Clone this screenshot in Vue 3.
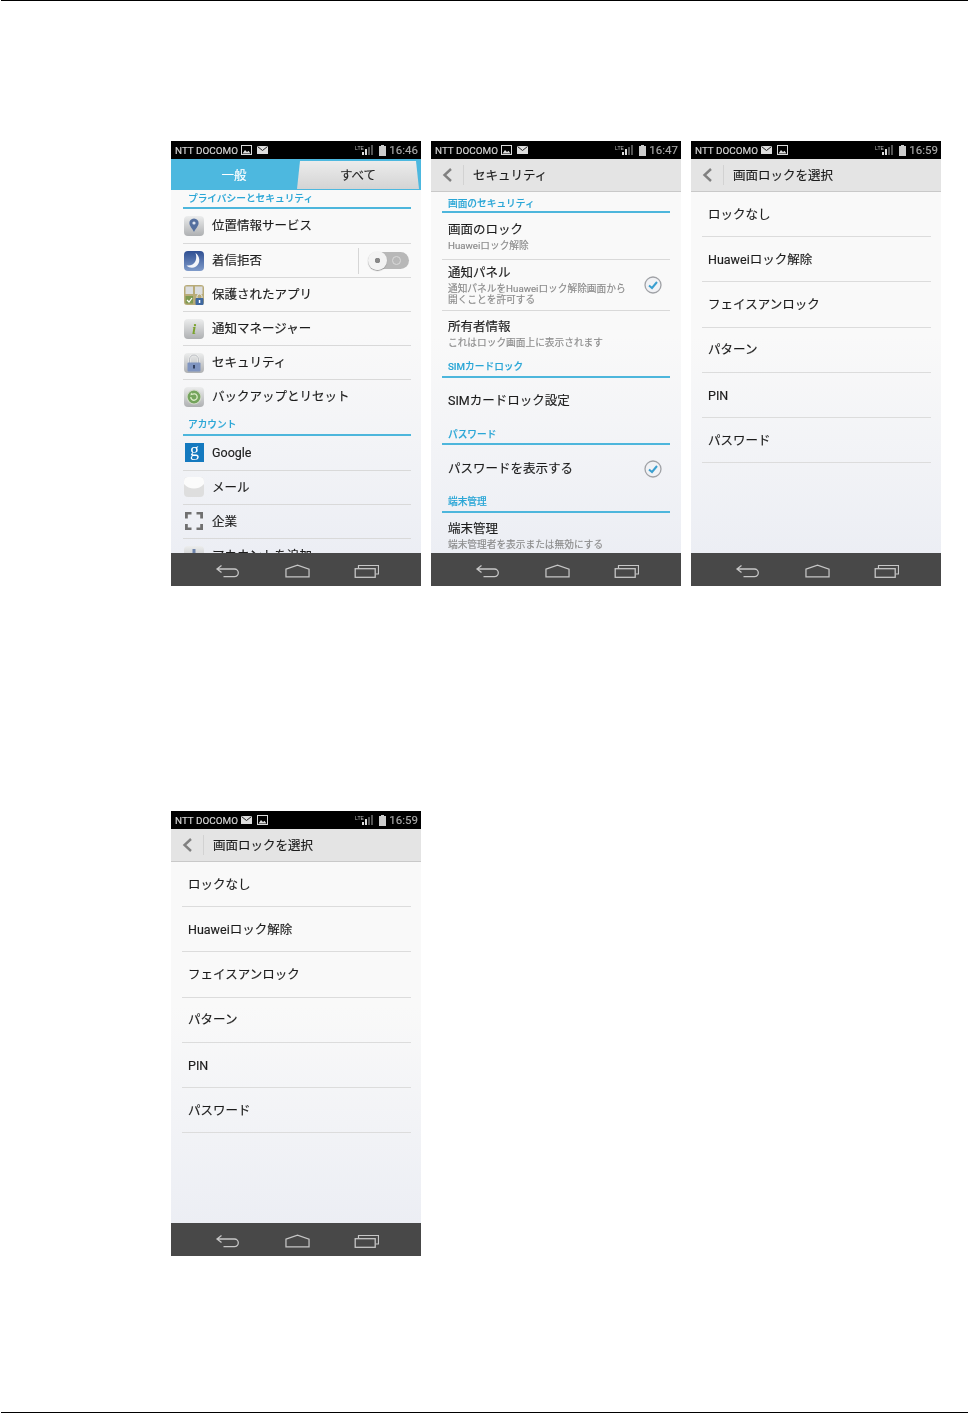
<script setup>
const settingsA = [
  { key: 'pin', label: '位置情報サービス', h: 35 },
  { key: 'moon', label: '着信拒否', h: 34, toggle: true },
  { key: 'apps', label: '保護されたアプリ', h: 34 },
  { key: 'info', label: '通知マネージャー', h: 34 },
  { key: 'lock', label: 'セキュリティ', h: 34 },
  { key: 'backup', label: 'バックアップとリセット', h: 34, last: true },
]
const settingsB = [
  { key: 'google', label: 'Google', h: 34.5, nudge: true },
  { key: 'mail', label: 'メール', h: 34 },
  { key: 'corp', label: '企業', h: 34 },
  { key: 'add', label: 'アカウントを追加', h: 34, last: true },
]
const lockOptions = ['ロックなし', 'Huaweiロック解除', 'フェイスアンロック', 'パターン', 'PIN', 'パスワード']
const rows = [
  [
    { kind: 'settings', time: '16:46', order: ['image', 'mail'] },
    { kind: 'security', time: '16:47', order: ['image', 'mail'], title: 'セキュリティ' },
    { kind: 'select', time: '16:59', order: ['mail', 'image'], title: '画面ロックを選択' },
  ],
  [{ kind: 'select', time: '16:59', order: ['mail', 'image'], title: '画面ロックを選択' }],
]
</script>

<template>
  <div class="page">
    <div class="rule"></div>
    <div v-for="(row, r) in rows" :key="r" class="shots" :class="{ second: r === 1 }">
      <section v-for="(s, i) in row" :key="i" class="phone">
        <header class="status">
          <span class="carrier">NTT DOCOMO</span>
          <template v-for="ic in s.order" :key="ic">
            <svg v-if="ic === 'image'" class="st-ic" viewBox="0 0 11 10">
              <rect x=".5" y=".5" width="10" height="9" fill="none" stroke="#ddd" />
              <path d="M1.500 8.500 L4 5 L6 7 L7.500 5.800 L9.500 8.500Z" fill="#ddd" />
            </svg>
            <svg v-else class="st-ic" viewBox="0 0 11 10">
              <rect x="0" y="1" width="11" height="8" fill="#ddd" />
              <path d="M.5 1.500 L5.500 5.500 L10.500 1.500" fill="none" stroke="#222" />
            </svg>
          </template>
          <span class="spacer"></span>
          <svg class="signal" viewBox="0 0 18 11">
            <text x="0" y="5" class="lte">LTE</text>
            <rect x="7" y="7" width="2" height="3" fill="#ddd" />
            <rect x="10" y="4" width="2" height="6" fill="#ddd" />
            <rect x="13" y="2" width="2" height="8" fill="#555" />
            <rect x="16" y="0" width="2" height="10" fill="#555" />
          </svg>
          <svg class="battery" viewBox="0 0 7 11">
            <path d="M2 0h3v1h2v10H0V1h2z" fill="#ccc" />
          </svg>
          <span class="time">{{ s.time }}</span>
        </header>

        <div v-if="s.kind === 'settings'" class="tabs">
          <span class="tab-left">一般</span>
          <span class="tab-right">すべて</span>
        </div>
        <div v-else class="actionbar">
          <svg class="chev" viewBox="0 0 11 14">
            <path d="M9 1 L2.500 7 L9 13" fill="none" stroke="#808080" stroke-width="2.400" />
          </svg>
          <span class="bar-div"></span>
          <span class="bar-title">{{ s.title }}</span>
        </div>

        <main class="content">
          <template v-if="s.kind === 'settings'">
            <div class="cat cat-a">プライバシーとセキュリティ</div>
            <template v-for="(group, g) in [settingsA, settingsB]" :key="g">
              <div v-if="g === 1" class="cat cat-b">アカウント</div>
              <div
                v-for="it in group"
                :key="it.key"
                class="set-row"
                :class="{ last: it.last }"
                :style="{ height: it.h + 'px' }"
              >
                <svg class="row-ic" viewBox="0 0 22 22">
                  <defs>
                    <linearGradient id="tile" x1="0" y1="0" x2="0" y2="1">
                      <stop offset="0" stop-color="#eceded" />
                      <stop offset="1" stop-color="#aeb0b2" />
                    </linearGradient>
                    <linearGradient id="night" x1="0" y1="0" x2="0" y2="1">
                      <stop offset="0" stop-color="#2f4f92" />
                      <stop offset="1" stop-color="#7f9bca" />
                    </linearGradient>
                  </defs>
                  <template v-if="it.key === 'pin'">
                    <rect x="1" y="1" width="20" height="20" rx="4" fill="url(#tile)" />
                    <path d="M11 3.500c-3 0-4.600 2.200-4.600 4.500 0 3.200 3 5.500 4.600 9 1.600-3.500 4.600-5.800 4.600-9 0-2.300-1.600-4.500-4.600-4.500z" fill="#55709f" />
                    <circle cx="11" cy="8" r="1.600" fill="#dfe5f0" />
                  </template>
                  <template v-else-if="it.key === 'moon'">
                    <rect x="1" y="1" width="20" height="20" rx="4" fill="url(#night)" />
                    <path d="M12.500 3C17 6 18 13 13 16.500C10 18.500 6 18 3.500 15.500C7.500 16 11 14.500 12.500 11C13.500 8.500 13.500 5.500 12.500 3Z" fill="#f4f6fa" />
                  </template>
                  <template v-else-if="it.key === 'apps'">
                    <rect x="1" y="1" width="20" height="20" rx="3" fill="#b8ab78" />
                    <rect x="2.500" y="2.500" width="7.500" height="7.500" fill="#dcdee0" />
                    <rect x="12" y="2.500" width="7.500" height="7.500" fill="#dcdee0" />
                    <rect x="2.500" y="12" width="7.500" height="7.500" fill="#7e9a50" />
                    <path d="M4 16l2 2 3-4" fill="none" stroke="#fff" stroke-width="1.200" />
                    <path d="M14 14v-1.500a2.500 2.500 0 0 1 5 0V14" fill="none" stroke="#e6e6e6" stroke-width="1" />
                    <rect x="12.500" y="14" width="8" height="7" rx="1" fill="#3f68a0" />
                    <rect x="15.800" y="16" width="1.500" height="3" fill="#fff" />
                  </template>
                  <template v-else-if="it.key === 'info'">
                    <rect x="1" y="1" width="20" height="20" rx="4" fill="url(#tile)" />
                    <text x="11" y="15.500" text-anchor="middle" class="i-glyph">i</text>
                  </template>
                  <template v-else-if="it.key === 'lock'">
                    <rect x="1" y="1" width="20" height="20" rx="4" fill="url(#tile)" />
                    <path d="M6.500 11V7.500a4.500 4.500 0 0 1 9 0V11" fill="none" stroke="#f2f2f2" stroke-width="2" />
                    <path d="M6.500 11V7.500a4.500 4.500 0 0 1 9 0V11" fill="none" stroke="#8e939c" stroke-width=".6" />
                    <rect x="4.500" y="10.500" width="13" height="9" rx="1" fill="#7f94c0" />
                    <rect x="10.200" y="13" width="1.600" height="3.500" fill="#1f2b48" />
                  </template>
                  <template v-else-if="it.key === 'backup'">
                    <rect x="1" y="1" width="20" height="20" rx="4" fill="url(#tile)" />
                    <circle cx="11" cy="11" r="7" fill="#74a45c" stroke="#d4dacd" stroke-width="1.200" />
                    <path d="M7.800 11a3.200 3.200 0 1 0 1.400-2.600" fill="none" stroke="#dcebc8" stroke-width="1.300" />
                    <path d="M8 6.500L9.800 8.500L7.500 9.500Z" fill="#dcebc8" />
                  </template>
                  <template v-else-if="it.key === 'google'">
                    <rect x="2" y="1" width="19" height="19" fill="#1479bf" />
                    <text x="11.500" y="13.500" text-anchor="middle" class="g-glyph">g</text>
                  </template>
                  <template v-else-if="it.key === 'mail'">
                    <rect x="1" y="1" width="20" height="20" rx="4" fill="#dedede" />
                    <path d="M1 5C1 2 3 1 5 1H17C19 1 21 2 21 5V8C16 14 6 14 1 8Z" fill="#fbfbfb" />
                  </template>
                  <template v-else-if="it.key === 'corp'">
                    <path d="M2 8.500V2H8.500V4.500H4.800V8.500ZM13.500 2H20V8.500H17.200V4.500H13.500ZM2 14H4.800V17.500H8.500V20H2ZM17.200 14H20V20H13.500V17.500H17.200Z" fill="#707070" />
                  </template>
                  <template v-else>
                    <rect x="1" y="1" width="20" height="20" rx="4" fill="url(#tile)" />
                    <path d="M11 4V18M4 11H18" stroke="#6d83ab" stroke-width="3" />
                  </template>
                </svg>
                <span class="set-label" :class="{ lift: g === 0, drop: it.nudge }">{{ it.label }}</span>
                <div v-if="it.toggle" class="toggle-wrap">
                  <span class="toggle"><i class="knob"></i><i class="hole"></i></span>
                </div>
              </div>
            </template>
          </template>

          <template v-else-if="s.kind === 'security'">
            <div class="sec-cat c1">画面のセキュリティ</div>
            <div class="sec-row r1 sep">
              <div class="sec-main"><div class="t">画面のロック</div><div class="d">Huaweiロック解除</div></div>
            </div>
            <div class="sec-row r2 sep">
              <div class="sec-main"><div class="t">通知パネル</div><div class="d">通知パネルをHuaweiロック解除画面から<br />開くことを許可する</div></div>
              <svg class="check" viewBox="0 0 18 18">
                <circle cx="9" cy="9" r="8" fill="#f1f2f5" stroke="#a0a2a6" stroke-width="1.300" />
                <path d="M5 9.500 L8 12 L13 6" fill="none" stroke="#3a9fd0" stroke-width="2" />
              </svg>
            </div>
            <div class="sec-row r3">
              <div class="sec-main"><div class="t">所有者情報</div><div class="d">これはロック画面上に表示されます</div></div>
            </div>
            <div class="sec-cat c2">SIMカードロック</div>
            <div class="sec-row r4"><div class="t">SIMカードロック設定</div></div>
            <div class="sec-cat">パスワード</div>
            <div class="sec-row r4">
              <div class="sec-main"><div class="t">パスワードを表示する</div></div>
              <svg class="check" viewBox="0 0 18 18">
                <circle cx="9" cy="9" r="8" fill="#f1f2f5" stroke="#a0a2a6" stroke-width="1.300" />
                <path d="M5 9.500 L8 12 L13 6" fill="none" stroke="#3a9fd0" stroke-width="2" />
              </svg>
            </div>
            <div class="sec-cat">端末管理</div>
            <div class="sec-row r5">
              <div class="sec-main"><div class="t">端末管理</div><div class="d">端末管理者を表示または無効にする</div></div>
            </div>
          </template>

          <template v-else>
            <div v-for="opt in lockOptions" :key="opt" class="opt" :class="{ latin: opt === 'PIN' }">{{ opt }}</div>
          </template>
        </main>

        <footer class="nav">
          <svg class="nav-ic" viewBox="0 0 24 14">
            <path d="M6 1.500 L1.500 5 L6 8.500 M2 5 H19 A3.800 3.800 0 0 1 19 12.600 H8" fill="none" stroke="#c6c6c6" stroke-width="1.300" />
          </svg>
          <svg class="nav-ic" viewBox="0 0 26 14">
            <path d="M1 5 L13 .8 L25 5 V13 H1 Z" fill="none" stroke="#c6c6c6" stroke-width="1.300" />
          </svg>
          <svg class="nav-ic" viewBox="0 0 24 14">
            <path d="M4 4 V1.500 H24 V10 H21" fill="none" stroke="#c6c6c6" stroke-width="1.200" />
            <rect x=".7" y="4.700" width="20" height="8.600" fill="none" stroke="#c6c6c6" stroke-width="1.300" />
          </svg>
        </footer>
      </section>
    </div>
    <div class="rule bottom"></div>
  </div>
</template>

<style scoped>
.page {
  height: 1413px;
  display: flex;
  flex-direction: column;
  background: #fff;
  font-family: Roboto, "Noto Sans CJK JP", sans-serif;
  overflow: hidden;
}
.rule {
  height: 1px;
  margin-left: 1px;
  background: #000;
  flex: none;
}
.rule.bottom {
  margin-top: auto;
}
.shots {
  display: flex;
  gap: 10px;
  margin: 140px 0 0 171px;
}
.shots.second {
  margin-top: 225px;
}
.phone {
  width: 250px;
  height: 445px;
  display: flex;
  flex-direction: column;
  overflow: hidden;
  filter: blur(0.35px);
  -webkit-text-stroke: 0.15px currentColor;
}
.status {
  height: 18px;
  flex: none;
  background: #000;
  display: flex;
  align-items: center;
  padding: 0 3px 0 4px;
  color: #d8d8d8;
}
.carrier {
  font-size: 9.900px;
  margin-right: 3px;
  white-space: nowrap;
}
.st-ic {
  width: 11px;
  height: 10px;
  margin-right: 5px;
}
.spacer {
  flex: 1;
}
.signal {
  width: 18px;
  height: 11px;
  margin-right: 6px;
}
.lte {
  font-size: 5px;
  fill: #bbb;
  font-family: "Liberation Sans", sans-serif;
}
.battery {
  width: 7px;
  height: 11px;
  margin-right: 3px;
}
.time {
  font-size: 11.500px;
  color: #aaa;
}
.tabs {
  height: 31px;
  flex: none;
  display: flex;
  background: #4db8df;
  font-size: 12.500px;
}
.tab-left {
  width: 126px;
  text-align: center;
  color: #fff;
  line-height: 33px;
}
.tab-right {
  width: 122px;
  margin-top: 2px;
  height: 28px;
  line-height: 29px;
  text-align: center;
  color: #222;
  background: linear-gradient(#ececec, #d4d4d4);
  clip-path: polygon(3px 0, 119px 0, 122px 100%, 0 100%);
}
.actionbar {
  height: 33px;
  flex: none;
  display: flex;
  align-items: center;
  background: #e4e4e4;
  border-bottom: 1px solid #c9c9c9;
  box-sizing: border-box;
}
.chev {
  width: 11px;
  height: 14px;
  margin-left: 11px;
}
.bar-div {
  width: 1px;
  height: 20px;
  background: #d2d2d2;
  margin-left: 10px;
}
.bar-title {
  margin: 0 0 2px 9px;
  font-size: 12.500px;
  color: #1c1c1c;
}
.content {
  flex: 1;
  min-height: 0;
  overflow: hidden;
  background: linear-gradient(#f9f9f9 40%, #eceef4);
  color: #1c1c1c;
}
.cat {
  margin: 0 10px 0 12px;
  padding-left: 5px;
  font-size: 9.700px;
  font-weight: 500;
  color: #2aa6d6;
  border-bottom: 2px solid #4db6dc;
  box-sizing: border-box;
}
.cat-a {
  height: 19px;
  line-height: 17px;
}
.cat-b {
  height: 22px;
  line-height: 21px;
}
.set-row {
  margin: 0 10px 0 12px;
  display: flex;
  align-items: center;
  box-sizing: border-box;
  border-bottom: 1px solid #d9d9d9;
}
.set-row.last {
  border-bottom: 0;
}
.row-ic {
  width: 22px;
  height: 22px;
  flex: none;
}
.set-label {
  margin: 0 0 2px 7px;
  font-size: 12.500px;
}
.set-label.lift {
  margin-bottom: 3px;
}
.set-label.drop {
  margin-bottom: 0;
}
.i-glyph {
  font: italic bold 15px "Liberation Serif", serif;
  fill: #7ba32f;
}
.g-glyph {
  font: 18px "Liberation Serif", serif;
  fill: #fff;
  -webkit-text-stroke: 0;
}
.toggle-wrap {
  margin-left: auto;
  height: 26px;
  padding-left: 9px;
  margin-right: 2px;
  border-left: 1px solid #d6d6d6;
  display: flex;
  align-items: center;
}
.toggle {
  position: relative;
  width: 41px;
  height: 17px;
  border-radius: 9px;
  background: #b8b8b8;
  display: block;
}
.knob {
  position: absolute;
  left: 0;
  top: -1px;
  width: 19px;
  height: 19px;
  border-radius: 50%;
  background: radial-gradient(circle, #888 0 2.500px, #f3f3f3 3px);
  box-shadow: 0 1px 1px #999;
}
.hole {
  position: absolute;
  left: 24px;
  top: 4px;
  width: 9px;
  height: 9px;
  border-radius: 50%;
  border: 1px solid #dadada;
  box-sizing: border-box;
}
.sec-cat {
  height: 20.500px;
  margin: 0 11px;
  padding-left: 6px;
  box-sizing: border-box;
  border-bottom: 2px solid #4db6dc;
  font-size: 9.700px;
  font-weight: 500;
  line-height: 19px;
  color: #2aa6d6;
}
.c1 {
  height: 21px;
  line-height: 23px;
}
.c2 {
  line-height: 20px;
}
.sec-row {
  margin: 0 11px;
  padding: 0 8px 0 6px;
  display: flex;
  align-items: center;
  justify-content: space-between;
  box-sizing: border-box;
}
.sep {
  border-bottom: 1px solid #d9d9d9;
}
.r1 {
  height: 47px;
}
.r2 {
  height: 51px;
}
.r3 {
  height: 46px;
  padding-bottom: 1px;
}
.r4 {
  height: 47px;
}
.r5 {
  height: 42px;
  align-items: flex-start;
  padding-top: 8px;
}
.t {
  font-size: 12.500px;
  line-height: 16px;
}
.d {
  font-size: 9.700px;
  line-height: 11px;
  color: #8b8b8b;
  margin-top: 2px;
}
.check {
  width: 18px;
  height: 18px;
  flex: none;
}
.opt {
  height: 45.200px;
  margin: 0 10px 0 11px;
  padding: 0 0 2px 6px;
  box-sizing: border-box;
  border-bottom: 1px solid #dcdcdc;
  display: flex;
  align-items: center;
  font-size: 12.500px;
}
.opt.latin {
  padding: 2px 0 0 6px;
}
.nav {
  height: 33px;
  flex: none;
  background: #484848;
  display: flex;
  align-items: center;
  gap: 44.500px;
  padding: 3px 0 0 44px;
  box-sizing: border-box;
}
.nav-ic {
  width: 25px;
  height: 14px;
}
</style>
